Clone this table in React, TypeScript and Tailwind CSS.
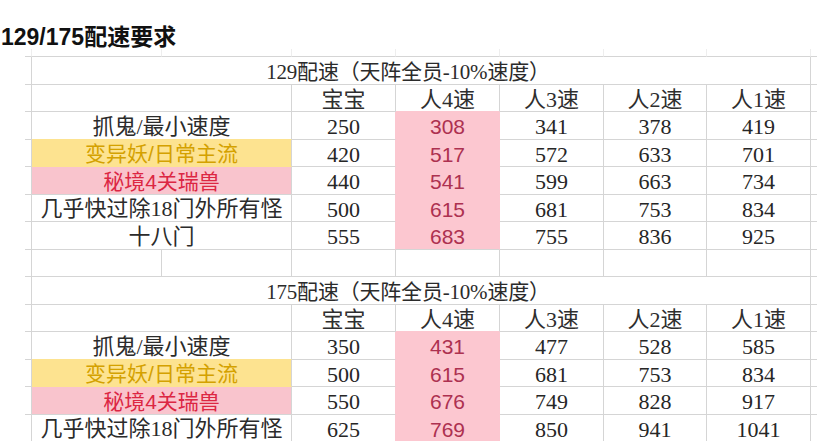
import React from "react"

type Row = {
  label: string
  tone?: "yellow" | "pink"
  nums: string[]
}

const serif = "font-['Liberation_Serif','Noto_Sans_CJK_SC',serif]"
const sans = "font-['Liberation_Sans','Noto_Sans_CJK_SC',sans-serif]"

const table1: Row[] = [
  { label: "抓鬼/最小速度", nums: ["250", "308", "341", "378", "419"] },
  { label: "变异妖/日常主流", tone: "yellow", nums: ["420", "517", "572", "633", "701"] },
  { label: "秘境4关瑞兽", tone: "pink", nums: ["440", "541", "599", "663", "734"] },
  { label: "几乎快过除18门外所有怪", nums: ["500", "615", "681", "753", "834"] },
  { label: "十八门", nums: ["555", "683", "755", "836", "925"] },
]

const table2: Row[] = [
  { label: "抓鬼/最小速度", nums: ["350", "431", "477", "528", "585"] },
  { label: "变异妖/日常主流", tone: "yellow", nums: ["500", "615", "681", "753", "834"] },
  { label: "秘境4关瑞兽", tone: "pink", nums: ["550", "676", "749", "828", "917"] },
  { label: "几乎快过除18门外所有怪", nums: ["625", "769", "850", "941", "1041"] },
]

const heads = ["宝宝", "人4速", "人3速", "人2速", "人1速"]
const numW = ["w-[104px]", "w-[104px]", "w-[104px]", "w-[103px]", "w-[104px]"]

function Stubs({ children }: { children: React.ReactNode }) {
  return (
    <div className="flex h-[27.5px] pl-[25px]">
      <div className="w-[7px] shrink-0 border-r border-b border-[#d5d5d5]" />
      {children}
      <div className="w-[6px] shrink-0 border-b border-[#d5d5d5]" />
    </div>
  )
}

function TitleRow({ text }: { text: string }) {
  return (
    <Stubs>
      <div className={`w-[779px] shrink-0 flex items-center justify-center pr-[26px] pt-[5px] border-r border-b border-[#d5d5d5] text-[21px] tracking-[-0.2px] text-[#2b2b2b] ${serif}`}>
        {text}
      </div>
    </Stubs>
  )
}

function HeadRow() {
  return (
    <Stubs>
      <div className="w-[260px] shrink-0 border-r border-b border-[#d5d5d5]" />
      {heads.map((h, i) => (
        <div
          key={h}
          className={`${numW[i]} shrink-0 flex items-center justify-center pt-[4px] border-r border-b text-[22px] text-[#2e2e2e] ${serif} ${
            i === 1 ? "border-[#d5d5d5] border-b-[#fcc7d0]" : "border-[#d5d5d5]"
          }`}
        >
          {h}
        </div>
      ))}
    </Stubs>
  )
}

function DataRow({ row, next, last }: { row: Row; next?: Row; last: boolean }) {
  let labelCls = `text-[22px] text-[#2b2b2b] ${serif} border-[#d5d5d5]`
  if (row.tone === "yellow") labelCls = `bg-[#fde390] text-[21px] text-[#d4a100] ${sans} border-r-[#d5d5d5] border-b-[#fde390]`
  if (row.tone === "pink") labelCls = `bg-[#f9c4cd] text-[21px] text-[#dc2643] ${sans} border-[#d5d5d5]`
  if (!row.tone && next?.tone === "yellow") labelCls = `text-[22px] text-[#2b2b2b] ${serif} border-r-[#d5d5d5] border-b-[#fde390]`

  return (
    <Stubs>
      <div className={`w-[260px] shrink-0 flex items-center justify-center pt-[3px] leading-[22px] border-r border-b ${labelCls}`}>
        {row.label}
      </div>
      {row.nums.map((n, i) => {
        if (i === 1) {
          return (
            <div
              key={i}
              className={`${numW[i]} shrink-0 flex items-center justify-center pt-[4px] leading-[20px] bg-[#fcc7d0] border-r border-b border-r-[#fcc7d0] text-[21px] text-[#ad3150] ${sans} ${
                last ? "border-b-[#d5d5d5]" : "border-b-[#fcc7d0]"
              }`}
            >
              {n}
            </div>
          )
        }
        return (
          <div
            key={i}
            className={`${numW[i]} shrink-0 flex items-center justify-center pt-[4px] leading-[20px] border-r border-b text-[22px] text-[#262626] ${serif} ${
              i === 0 ? "border-r-[#fcc7d0] border-b-[#d5d5d5]" : "border-[#d5d5d5]"
            }`}
          >
            {n}
          </div>
        )
      })}
    </Stubs>
  )
}

function EmptyRow() {
  return (
    <Stubs>
      <div className="w-[130px] shrink-0 border-r border-b border-[#d5d5d5]" />
      <div className="w-[130px] shrink-0 border-r border-b border-[#d5d5d5]" />
      {numW.map((w, i) => (
        <div key={i} className={`${w} shrink-0 border-r border-b border-[#d5d5d5]`} />
      ))}
    </Stubs>
  )
}

function Block({ title, rows }: { title: string; rows: Row[] }) {
  return (
    <>
      <TitleRow text={title} />
      <HeadRow />
      {rows.map((r, i) => (
        <DataRow key={i} row={r} next={rows[i + 1]} last={i === rows.length - 1} />
      ))}
    </>
  )
}

export default function App() {
  return (
    <div className="w-[817px] h-[441px] overflow-hidden bg-white">
      <div className={`h-[49px] pt-[25px] pl-[1px] text-[23px] leading-[24px] font-bold text-[#111] ${sans}`}>
        129/175配速要求
      </div>
      <div className="flex h-[8px] pl-[25px]">
        <div className="w-[7px] shrink-0 border-r border-b border-r-[#eeeeee] border-b-[#d5d5d5]" />
        {[130, 130, 104, 104, 104, 103, 104].map((w, i) => (
          <div
            key={i}
            style={{ width: w }}
            className="shrink-0 border-r border-b border-r-[#eeeeee] border-b-[#d5d5d5]"
          />
        ))}
        <div className="w-[6px] shrink-0 border-b border-[#d5d5d5]" />
      </div>
      <Block title="129配速（天阵全员-10%速度）" rows={table1} />
      <EmptyRow />
      <Block title="175配速（天阵全员-10%速度）" rows={table2} />
    </div>
  )
}
